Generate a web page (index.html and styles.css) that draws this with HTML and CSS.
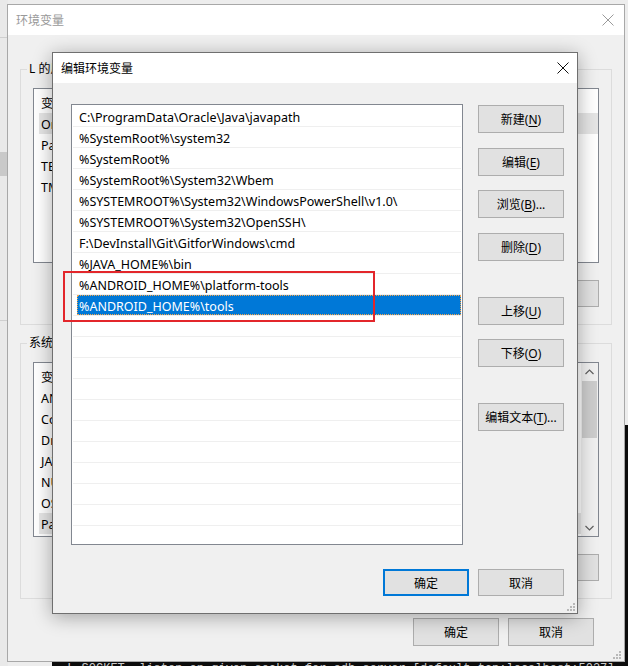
FILE: index.html
```html
<!DOCTYPE html>
<html lang="zh-CN">
<head>
<meta charset="utf-8">
<title>编辑环境变量</title>
<link rel="stylesheet" href="styles.css">
</head>
<body>
<div class="desktop">
  <div class="backstrip"><div class="bs-line top"></div><div class="bs-thumb"></div><div class="bs-line low"></div></div>

  <div class="terminal">
    <pre>-L SOCKET  listen on given socket for adb server [default=tcp:localhost:5037]</pre>
  </div>

  <section class="window env">
    <header class="titlebar inactive">
      <span class="title">环境变量</span>
      <svg class="close" width="12" height="12" viewBox="0 0 12 12"><path d="M0.5 0.5 L11.5 11.5 M11.5 0.5 L0.5 11.5" stroke="#9a9a9a" stroke-width="1" fill="none"/></svg>
    </header>
    <div class="env-body">
      <fieldset class="group">
        <legend>L 的用户变量(<u>U</u>)</legend>
        <div class="listview user">
          <div class="lv-rows">
            <div class="lv-head"><span class="c1">变量</span><span class="c2">值</span></div>
            <div class="lv-row sel"><span class="c1">OneDrive</span><span class="c2">C:\Users\L\OneDrive</span></div>
            <div class="lv-row"><span class="c1">Path</span><span class="c2">C:\Users\L\AppData\Local\Microsoft\WindowsApps;</span></div>
            <div class="lv-row"><span class="c1">TEMP</span><span class="c2">C:\Users\L\AppData\Local\Temp</span></div>
            <div class="lv-row"><span class="c1">TMP</span><span class="c2">C:\Users\L\AppData\Local\Temp</span></div>
          </div>
        </div>
        <div class="btnrow">
          <button class="btn">新建(<u>N</u>)...</button>
          <button class="btn">编辑(<u>E</u>)...</button>
          <button class="btn">删除(<u>D</u>)</button>
        </div>
      </fieldset>

      <fieldset class="group sys">
        <legend>系统变量(<u>S</u>)</legend>
        <div class="listview system">
          <div class="lv-rows">
            <div class="lv-head"><span class="c1">变量</span><span class="c2">值</span></div>
            <div class="lv-row"><span class="c1">ANDROID_HOME</span><span class="c2">F:\DevInstall\Android\sdk</span></div>
            <div class="lv-row"><span class="c1">ComSpec</span><span class="c2">C:\Windows\system32\cmd.exe</span></div>
            <div class="lv-row"><span class="c1">DriverData</span><span class="c2">C:\Windows\System32\Drivers\DriverData</span></div>
            <div class="lv-row"><span class="c1">JAVA_HOME</span><span class="c2">F:\DevInstall\Java\jdk1.8.0</span></div>
            <div class="lv-row"><span class="c1">NUMBER_OF_PROCESSORS</span><span class="c2">8</span></div>
            <div class="lv-row"><span class="c1">OS</span><span class="c2">Windows_NT</span></div>
            <div class="lv-row sel"><span class="c1">Path</span><span class="c2">C:\ProgramData\Oracle\Java\javapath;</span></div>
          </div>
          <div class="vscroll">
            <div class="arrow"><svg width="9" height="6" viewBox="0 0 9 6"><path d="M0.5 5 L4.5 1 L8.5 5" stroke="#606060" stroke-width="1.2" fill="none"/></svg></div>
            <div class="thumb"></div>
            <div class="track"></div>
            <div class="arrow"><svg width="9" height="6" viewBox="0 0 9 6"><path d="M0.5 1 L4.5 5 L8.5 1" stroke="#606060" stroke-width="1.2" fill="none"/></svg></div>
          </div>
        </div>
        <div class="btnrow">
          <button class="btn">新建(<u>W</u>)...</button>
          <button class="btn">编辑(<u>I</u>)...</button>
          <button class="btn">删除(<u>L</u>)</button>
        </div>
      </fieldset>

      <div class="btnrow footer">
        <button class="btn tall">确定</button>
        <button class="btn tall">取消</button>
      </div>
    </div>
    <svg class="grip" width="10" height="10" viewBox="0 0 10 10"><g fill="#b8b8b8"><rect x="7" y="1" width="2" height="2"/><rect x="7" y="4" width="2" height="2"/><rect x="4" y="4" width="2" height="2"/><rect x="7" y="7" width="2" height="2"/><rect x="4" y="7" width="2" height="2"/><rect x="1" y="7" width="2" height="2"/></g></svg>
  </section>

  <section class="window dialog">
    <header class="titlebar">
      <span class="title">编辑环境变量</span>
      <svg class="close" width="12" height="12" viewBox="0 0 12 12"><path d="M0.5 0.5 L11.5 11.5 M11.5 0.5 L0.5 11.5" stroke="#111" stroke-width="1" fill="none"/></svg>
    </header>
    <div class="dlg-body">
      <div class="dlg-main">
        <div class="pathlist">
          <div class="p-row"><span class="cell">C:\ProgramData\Oracle\Java\javapath</span></div>
          <div class="p-row"><span class="cell">%SystemRoot%\system32</span></div>
          <div class="p-row"><span class="cell">%SystemRoot%</span></div>
          <div class="p-row"><span class="cell">%SystemRoot%\System32\Wbem</span></div>
          <div class="p-row"><span class="cell">%SYSTEMROOT%\System32\WindowsPowerShell\v1.0\</span></div>
          <div class="p-row"><span class="cell">%SYSTEMROOT%\System32\OpenSSH\</span></div>
          <div class="p-row"><span class="cell">F:\DevInstall\Git\GitforWindows\cmd</span></div>
          <div class="p-row"><span class="cell">%JAVA_HOME%\bin</span></div>
          <div class="p-row"><span class="cell">%ANDROID_HOME%\platform-tools</span></div>
          <div class="p-row selected"><span class="cell">%ANDROID_HOME%\tools</span></div>
          <div class="p-row"><span class="cell"></span></div>
          <div class="p-row"><span class="cell"></span></div>
          <div class="p-row"><span class="cell"></span></div>
          <div class="p-row"><span class="cell"></span></div>
          <div class="p-row"><span class="cell"></span></div>
          <div class="p-row"><span class="cell"></span></div>
          <div class="p-row"><span class="cell"></span></div>
          <div class="p-row"><span class="cell"></span></div>
          <div class="p-row"><span class="cell"></span></div>
          <div class="p-row"><span class="cell"></span></div>
          <div class="p-row"><span class="cell"></span></div>
        </div>
        <div class="dlg-buttons">
          <button class="btn b1">新建(<u>N</u>)</button>
          <button class="btn b2">编辑(<u>E</u>)</button>
          <button class="btn b3">浏览(<u>B</u>)...</button>
          <button class="btn b4">删除(<u>D</u>)</button>
          <button class="btn b5">上移(<u>U</u>)</button>
          <button class="btn b6">下移(<u>O</u>)</button>
          <button class="btn b7">编辑文本(<u>T</u>)...</button>
        </div>
      </div>
      <div class="btnrow dlg-footer">
        <button class="btn default">确定</button>
        <button class="btn">取消</button>
      </div>
    </div>
    <svg class="grip" width="10" height="10" viewBox="0 0 10 10"><g fill="#b8b8b8"><rect x="7" y="1" width="2" height="2"/><rect x="7" y="4" width="2" height="2"/><rect x="4" y="4" width="2" height="2"/><rect x="7" y="7" width="2" height="2"/><rect x="4" y="7" width="2" height="2"/><rect x="1" y="7" width="2" height="2"/></g></svg>
  </section>

  <div class="annot"></div>
</div>
</body>
</html>
```

FILE: styles.css
```css
* { box-sizing: border-box; }
html, body { margin: 0; padding: 0; }
body {
  width: 628px;
  height: 666px;
  overflow: hidden;
  background: #ededed;
  font-family: "Noto Sans", "Noto Sans CJK SC", sans-serif;
  font-size: 12px;
  color: #000;
}
u { text-decoration: underline; text-underline-offset: 2px; }

.desktop { position: relative; width: 628px; height: 666px; overflow: hidden; }

/* desktop remnants */
.backstrip { position: absolute; left: 0; top: 0; width: 8px; height: 666px; background: #e9e9e9; }
.bs-line { height: 1px; background: #cfcfcf; margin-top: 37px; }
.bs-line.low { margin-top: 144px; }
.bs-thumb { height: 24px; margin-top: 114px; background: #c9c9c9; }

.terminal {
  position: absolute; left: 52px; top: 425px; right: 0; bottom: 0;
  background: #0c0c0c; color: #cccccc;
}
.terminal pre {
  margin: 0; padding: 236px 0 0 8px;
  font-family: "Liberation Mono", monospace; font-size: 12px; line-height: 16px;
}

/* generic window */
.window {
  position: absolute;
  display: flex; flex-direction: column;
  background: #f0f0f0;
}
.titlebar {
  flex: none;
  height: 30px;
  background: #fff;
  display: flex; align-items: center; justify-content: space-between;
  padding-left: 8px;
  font-size: 12px;
}
.titlebar.inactive .title { color: #999; }
.grip { position: absolute; right: 1px; bottom: 1px; }

/* background window */
.env { left: 7px; top: 4px; width: 618px; height: 658px; border: 1px solid #a8a8a8; }
.env .close { margin-right: 10px; }
.env .grip { right: 2px; }
.env-body { padding: 26px 12px 0 12px; display: flex; flex-direction: column; }

.group {
  margin: 0; min-width: 0;
  border: 1px solid #dcdcdc;
  padding: 11px 12px 17px 12px;
}
.group.sys { margin-top: 10px; }
.group legend { padding: 0 2px; margin-left: -6px; line-height: 16px; color: #000; }

.listview {
  border: 1px solid #828790;
  background: #fff;
  display: flex;
  overflow: hidden;
  font-size: 12.5px;
}
.listview.user { height: 175px; }
.listview.system { height: 175px; }
.lv-rows { flex: 1; min-width: 0; }
.lv-head, .lv-row { display: flex; height: 21px; align-items: center; white-space: nowrap; padding-top: 2px; }
.lv-head { height: 24px; }
.lv-head .c1, .lv-row .c1 { width: 170px; padding-left: 7px; flex: none; }
.lv-row.sel { background: #e5e5e5; margin-left: 5px; }
.lv-row.sel .c1 { padding-left: 2px; }

.vscroll { width: 17px; flex: none; background: #f0f0f0; display: flex; flex-direction: column; }
.vscroll .arrow { height: 17px; display: flex; align-items: center; justify-content: center; }
.vscroll .thumb { height: 57px; margin: 1px 1px 0 1px; background: #cdcdcd; }
.vscroll .track { flex: 1; }

.btnrow { display: flex; justify-content: flex-end; gap: 9px; margin-top: 17px; }
.btn {
  width: 86px; height: 27px;
  margin: 0; padding: 0;
  background: #e1e1e1;
  border: 1px solid #adadad;
  font-family: inherit; font-size: 12px; color: #000;
  display: flex; align-items: center; justify-content: center;
  white-space: nowrap;
}
.btn.tall { height: 28px; }
.footer { margin-top: 19px; padding-right: 18px; }

/* foreground dialog */
.dialog {
  left: 52px; top: 52px; width: 526px; height: 562px;
  border: 1px solid #6f6f6f;
  box-shadow: 0 3px 18px rgba(0, 0, 0, 0.33);
}
.dialog .close { margin-right: 8px; }
.dlg-body { padding: 21px 13px 17px 18px; display: flex; flex-direction: column; }
.dlg-main { display: flex; gap: 15px; }
.pathlist {
  width: 392px; height: 441px;
  border: 1px solid #828790;
  background: #fff;
  padding: 1px 1px 0 1px;
  overflow: hidden;
  font-size: 12.5px;
}
.p-row {
  height: 21px;
  border-bottom: 1px solid #efefef;
  display: flex;
}
.p-row .cell {
  flex: 1;
  margin-left: 4px;
  padding-left: 2px;
  padding-top: 4px;
  line-height: 16px;
  height: 20px;
  white-space: nowrap;
}
.p-row.selected .cell {
  background: #0078d7;
  color: #fff;
  outline: 1px dotted #f6a64a;
  outline-offset: -1px;
}
.dlg-buttons { width: 86px; display: flex; flex-direction: column; }
.dlg-buttons .btn { height: 28px; }
.dlg-buttons .b1 { margin-top: 1px; }
.dlg-buttons .b2 { margin-top: 15px; }
.dlg-buttons .b3 { margin-top: 14px; }
.dlg-buttons .b4 { margin-top: 15px; }
.dlg-buttons .b5 { margin-top: 36px; }
.dlg-buttons .b6 { margin-top: 14px; }
.dlg-buttons .b7 { margin-top: 36px; }
.dlg-footer { margin-top: 24px; }
.btn.default { border: 2px solid #0078d7; }

/* red annotation */
.annot {
  position: absolute;
  left: 63px; top: 271px; width: 312px; height: 51px;
  border: 2px solid #e3262b;
}
```
